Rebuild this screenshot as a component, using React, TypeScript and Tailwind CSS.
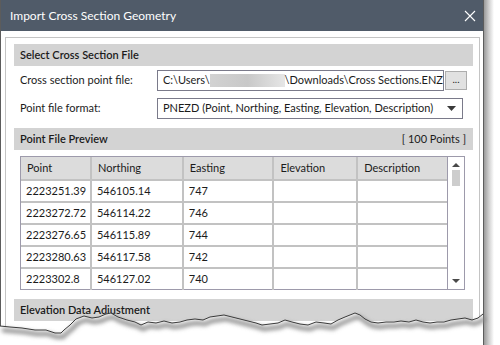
import React from "react";

const rows = [
  ["2223251.39", "546105.14", "747"],
  ["2223272.72", "546114.22", "746"],
  ["2223276.65", "546115.89", "744"],
  ["2223280.63", "546117.58", "742"],
  ["2223302.8", "546127.02", "740"],
];

const cols = [
  { name: "Point", w: "w-[70px]" },
  { name: "Northing", w: "w-[92px]" },
  { name: "Easting", w: "w-[91px]" },
  { name: "Elevation", w: "w-[84px]" },
  { name: "Description", w: "w-[90px]" },
];

function SectionHeader({ title, right }: { title: string; right?: string }) {
  return (
    <div className="h-[22px] bg-[#d3d3d3] flex items-center justify-between pl-[6px] pr-[7px] text-[11px] font-semibold text-[#1b1b1b]">
      <span>{title}</span>
      {right && <span className="font-normal">{right}</span>}
    </div>
  );
}

function TornEdge() {
  const pts = [
    [0, 326], [10, 327], [22, 328], [35, 330], [46, 330], [55, 333], [61, 333], [64, 330],
    [70, 325], [76, 319], [84, 316], [92, 318], [99, 317], [106, 314], [111, 313], [118, 317],
    [127, 320], [135, 322], [141, 325], [148, 322], [156, 323], [164, 321], [172, 323],
    [180, 322], [187, 320], [195, 319], [203, 320], [210, 317], [217, 316], [224, 315],
    [232, 317], [240, 319], [248, 321], [256, 323], [262, 325], [270, 324], [278, 323],
    [285, 320], [292, 322], [300, 324], [308, 325], [316, 322], [324, 323], [331, 324],
    [338, 320], [345, 317], [350, 315], [355, 313], [360, 315], [365, 319], [371, 322],
    [378, 323], [386, 322], [394, 322], [401, 321], [409, 322], [416, 320], [423, 322],
    [430, 323], [437, 322], [444, 322], [451, 320], [458, 319], [465, 318], [472, 320],
    [478, 318], [483, 314],
  ];
  const line = pts.map((p, i) => `${i ? "L" : "M"}${p[0]} ${p[1]}`).join(" ");
  const fill = `${line} L483 345 L0 345 Z`;
  return (
    <svg className="absolute left-0 top-0" width="500" height="345" viewBox="0 0 500 345">
      <defs>
        <filter id="blur" x="-10%" y="-50%" width="120%" height="200%">
          <feGaussianBlur stdDeviation="2" />
        </filter>
      </defs>
      <path d={fill} fill="#ffffff" />
      <path d={line} transform="translate(2 4)" fill="none" stroke="#8a8a8a" strokeWidth="4" filter="url(#blur)" />
      <path d={line} fill="none" stroke="#3a3a3a" strokeWidth="1" />
    </svg>
  );
}

export default function App() {
  return (
    <div
      className="relative w-[500px] h-[345px] bg-white overflow-hidden text-[#1b1b1b]"
      style={{ fontFamily: 'Lato, "Noto Sans", sans-serif' }}
    >
      <div className="flex h-full">
        <div className="w-[484px] h-full border-x border-[#5c5c5c] bg-white flex flex-col">
          {/* title bar */}
          <div className="h-[31px] bg-[#505b69] flex items-center justify-between pl-[9px] pr-[7px] text-white">
            <span className="text-[12px]">Import Cross Section Geometry</span>
            <svg width="12" height="12" viewBox="0 0 12 12">
              <path d="M1 1 L11 11 M11 1 L1 11" stroke="#ffffff" strokeWidth="1.1" />
            </svg>
          </div>

          {/* body */}
          <div className="flex-1 pt-[6px] pl-[4px] pr-[3px]">
            <div className="h-full border border-[#c4c4c4] pt-[6px] pl-[8px] pr-[6px]">
              <SectionHeader title="Select Cross Section File" />

              <div className="mt-[4px] flex items-center h-[21px] pl-[6px] text-[11px]">
                <span className="w-[137px]">Cross section point file:</span>
                <div className="w-[287px] h-[21px] border border-[#7a7a8a] flex items-center pl-[5px] whitespace-nowrap overflow-hidden">
                  <span>C:\Users\</span>
                  <span className="inline-block w-[78px] h-[13px] bg-gradient-to-r from-[#d2d2d2] via-[#c8c8c8] to-[#e6e6e6]" />
                  <span>\Downloads\Cross Sections.ENZ</span>
                </div>
                <div className="ml-[1px] w-[22px] h-[19px] border border-[#adadad] bg-[#e1e1e1] flex items-center justify-center text-[10px] leading-none pb-[4px]">
                  ...
                </div>
              </div>

              <div className="mt-[7px] flex items-center h-[21px] pl-[6px] text-[11px]">
                <span className="w-[137px]">Point file format:</span>
                <div className="w-[306px] h-[21px] border border-[#7a7a8a] flex items-center justify-between pl-[5px] pr-[6px] whitespace-nowrap">
                  <span>PNEZD (Point, Northing, Easting, Elevation, Description)</span>
                  <svg width="9" height="5" viewBox="0 0 9 5">
                    <path d="M0 0 L9 0 L4.5 5 Z" fill="#3a3a3a" />
                  </svg>
                </div>
              </div>

              <div className="mt-[9px]">
                <SectionHeader title="Point File Preview" right="[ 100 Points ]" />
              </div>

              <div className="mt-[6px] ml-[6px] mr-[8px] border border-[#9d9aab] flex h-[134px]">
                <table className="border-collapse text-[11px] table-fixed">
                  <thead>
                    <tr className="h-[23px] bg-[#dcdcdc]">
                      {cols.map((c, i) => (
                        <th
                          key={c.name}
                          className={`${c.w} font-normal text-left pl-[6px] border-b-2 border-[#c2c2c2] ${i < cols.length - 1 ? "border-r-2" : ""}`}
                        >
                          {c.name}
                        </th>
                      ))}
                    </tr>
                  </thead>
                  <tbody>
                    {rows.map((r, ri) => (
                      <tr key={ri} className="h-[22px]">
                        {[...r, "", ""].map((v, ci) => (
                          <td
                            key={ci}
                            className={`pl-[5px] border-[#c2c2c2] ${ri < rows.length - 1 ? "border-b-2" : ""} ${ci < 4 ? "border-r-2" : ""}`}
                          >
                            {v}
                          </td>
                        ))}
                      </tr>
                    ))}
                  </tbody>
                </table>
                <div className="w-[17px] border-l border-[#9d9aab] flex flex-col items-center pt-[6px] pb-[6px]">
                  <svg width="8" height="4" viewBox="0 0 8 4">
                    <path d="M0 4 L8 4 L4 0 Z" fill="#4a4a4a" />
                  </svg>
                  <div className="mt-[3px] w-[8px] h-[16px] bg-[#cdcdcd]" />
                  <div className="flex-1" />
                  <svg width="8" height="4" viewBox="0 0 8 4">
                    <path d="M0 0 L8 0 L4 4 Z" fill="#4a4a4a" />
                  </svg>
                </div>
              </div>

              <div className="mt-[9px]">
                <SectionHeader title="Elevation Data Adjustment" />
              </div>
            </div>
          </div>
        </div>
        {/* right shadow */}
        <div className="w-[10px] h-full bg-gradient-to-r from-[#9a9a9a] via-[#d0d0d0] to-white" />
      </div>
      <TornEdge />
    </div>
  );
}
